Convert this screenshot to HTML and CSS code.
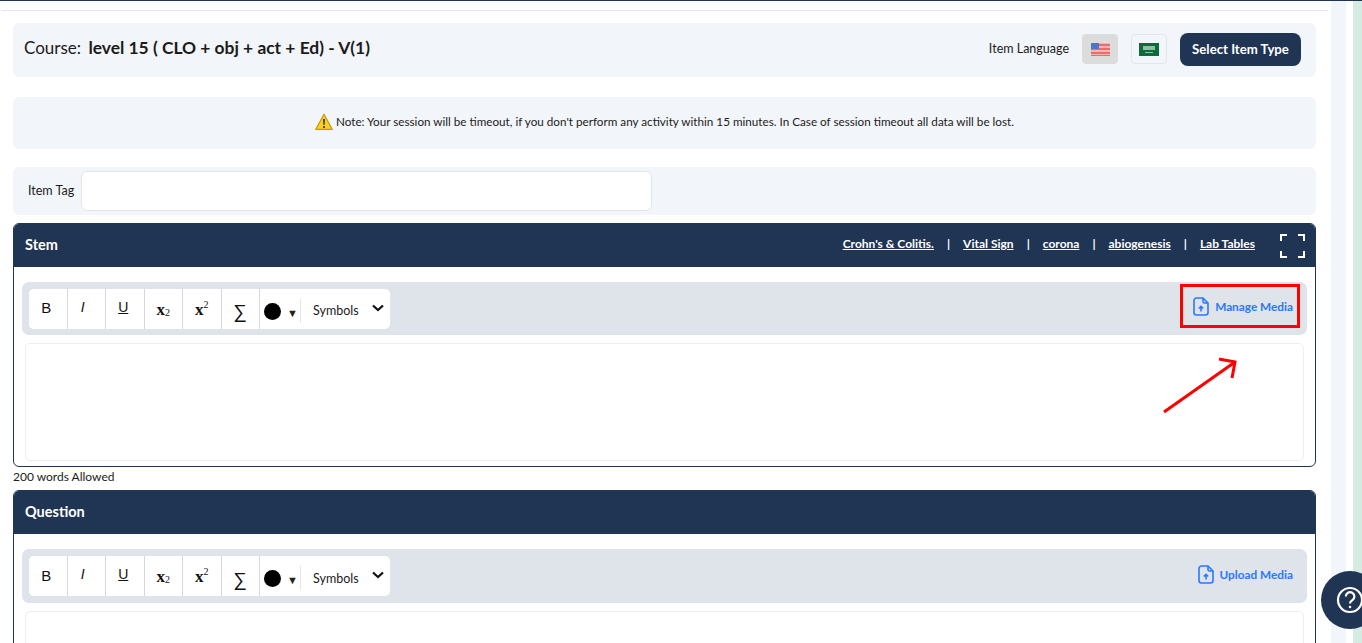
FILE: index.html
```html
<!DOCTYPE html>
<html lang="en">
  <head>
    <meta charset="UTF-8" name="viewport" content="width=device-width, initial-scale=1">
    <title>Add Item</title>
    <link rel="stylesheet" href="styles.css">
  </head>
  <body>
    <div class="top_line"></div>
    <div class="layout">
      <div class="content">
        <div class="rule"></div>

        <div class="card course_card">
          <div class="course_title">Course: <b>level 15 ( CLO + obj + act + Ed) - V(1)</b></div>
          <div class="course_actions">
            <span class="lang_label">Item Language</span>
            <button type="button" class="flag_btn flag_active">
              <svg width="19" height="13" viewBox="0 0 19 13">
                <rect width="19" height="13" fill="#f5b5b5"/>
                <rect y="1" width="19" height="2" fill="#ee6b6b"/>
                <rect y="5" width="19" height="2" fill="#ee6b6b"/>
                <rect y="9" width="19" height="2" fill="#ee6b6b"/>
                <rect y="12" width="19" height="1" fill="#ee6b6b"/>
                <rect width="8" height="6" fill="#4a78c4"/>
              </svg>
            </button>
            <button type="button" class="flag_btn">
              <svg width="20" height="13" viewBox="0 0 20 13">
                <rect width="20" height="13" fill="#0c6b3a"/>
                <rect x="4" y="3" width="12" height="4" fill="#8fbfa3"/>
                <rect x="6" y="9" width="8" height="1" fill="#8fbfa3"/>
              </svg>
            </button>
            <button type="button" class="type_btn">Select Item Type</button>
          </div>
        </div>

        <div class="card note_card">
          <svg class="note_icon" width="18" height="18" viewBox="0 0 18 18">
            <path d="M9 1.2 17.2 16.4H.8Z" fill="#f7d020" stroke="#c99a12" stroke-width="1.2" stroke-linejoin="round"/>
            <path d="M8.1 6h1.8l-.4 6h-1Z" fill="#222"/>
            <circle cx="9" cy="14" r="1" fill="#222"/>
          </svg>
          <span class="note_text">Note: Your session will be timeout, if you don't perform any activity within 15 minutes. In Case of session timeout all data will be lost.</span>
        </div>

        <div class="card tag_card">
          <label class="tag_label" for="item_tag">Item Tag</label>
          <input class="tag_input" type="text" id="item_tag">
        </div>

        <div class="panel stem_panel">
          <div class="panel_head">
            <span class="panel_title">Stem</span>
            <div class="head_links">
              <a href="#">Crohn's &amp; Colitis.</a><span>|</span>
              <a href="#">Vital Sign</a><span>|</span>
              <a href="#">corona</a><span>|</span>
              <a href="#">abiogenesis</a><span>|</span>
              <a href="#">Lab Tables</a>
              <svg class="full_icon" width="25" height="24" viewBox="0 0 25 24" fill="none" stroke="#fff" stroke-width="2">
                <path d="M1 7V1H7M18 1H24V7M1 17V23H7M18 23H24V17"/>
              </svg>
            </div>
          </div>
          <div class="panel_body">
            <div class="toolbar">
              <div class="tools">
                <button type="button" class="tool tool_b">B</button>
                <button type="button" class="tool tool_i">I</button>
                <button type="button" class="tool tool_u">U</button>
                <button type="button" class="tool tool_x">x<sub>2</sub></button>
                <button type="button" class="tool tool_x">x<sup>2</sup></button>
                <button type="button" class="tool tool_sum">∑</button>
                <div class="tool_color"><i class="color_dot"></i><i class="color_arrow">▼</i></div>
                <i class="tool_sep"></i>
                <div class="tool_symbols">Symbols
                  <svg width="12" height="8" viewBox="0 0 12 8" fill="none" stroke="#111" stroke-width="2.2"><path d="M1 1.5 6 6l5-4.5"/></svg>
                </div>
              </div>
              <a class="media_link" href="#">
                <svg width="16" height="19" viewBox="0 0 16 19" fill="none" stroke="#2a78ff" stroke-width="1.6">
                  <path d="M3.5 1H10l5 5v9.500a2.500 2.500 0 0 1-2.500 2.500h-9A2.500 2.500 0 0 1 1 15.500v-12A2.500 2.500 0 0 1 3.500 1Z"/>
                  <path d="M10 1v3.500a1.500 1.500 0 0 0 1.500 1.500H15M8 14.500V9.500M5.800 11.500 8 9.300l2.200 2.200"/>
                </svg>
                Manage Media
              </a>
            </div>
            <div class="editor stem_editor"></div>
          </div>
        </div>
        <div class="word_hint">200 words Allowed</div>

        <div class="panel question_panel">
          <div class="panel_head">
            <span class="panel_title">Question</span>
          </div>
          <div class="panel_body">
            <div class="toolbar toolbar_tall">
              <div class="tools">
                <button type="button" class="tool tool_b">B</button>
                <button type="button" class="tool tool_i">I</button>
                <button type="button" class="tool tool_u">U</button>
                <button type="button" class="tool tool_x">x<sub>2</sub></button>
                <button type="button" class="tool tool_x">x<sup>2</sup></button>
                <button type="button" class="tool tool_sum">∑</button>
                <div class="tool_color"><i class="color_dot"></i><i class="color_arrow">▼</i></div>
                <i class="tool_sep"></i>
                <div class="tool_symbols">Symbols
                  <svg width="12" height="8" viewBox="0 0 12 8" fill="none" stroke="#111" stroke-width="2.2"><path d="M1 1.5 6 6l5-4.5"/></svg>
                </div>
              </div>
              <a class="media_link" href="#">
                <svg width="16" height="19" viewBox="0 0 16 19" fill="none" stroke="#2a78ff" stroke-width="1.6">
                  <path d="M3.5 1H10l5 5v9.500a2.500 2.500 0 0 1-2.500 2.500h-9A2.500 2.500 0 0 1 1 15.500v-12A2.500 2.500 0 0 1 3.500 1Z"/>
                  <path d="M10 1v3.500a1.500 1.500 0 0 0 1.500 1.500H15M8 14.500V9.500M5.800 11.500 8 9.300l2.200 2.200"/>
                </svg>
                Upload Media
              </a>
            </div>
            <div class="editor"></div>
          </div>
        </div>
      </div>
      <div class="rail"></div>
      <div class="rail_gap"></div>
      <div class="rail_green"></div>
    </div>

    <!-- annotation drawn over the screenshot -->
    <div class="mark_box"></div>
    <svg class="mark_arrow" width="80" height="60" viewBox="0 0 80 60" fill="none" stroke="#f00" stroke-width="3">
      <path d="M3 57 74 7M58 4 74 7 71 23"/>
    </svg>

    <button type="button" class="help_btn">
      <svg width="30" height="30" viewBox="0 0 30 30" fill="none" stroke="#fff" stroke-width="2.2">
        <circle cx="15" cy="15" r="12"/>
        <path d="M10.800 11.500a4.300 4.300 0 1 1 6.500 3.700c-1.500.9-2.300 1.700-2.300 3.300"/>
        <circle cx="15" cy="22" r="1.300" fill="#fff" stroke="none"/>
      </svg>
    </button>
  </body>
</html>
```

FILE: styles.css
```css
body {
  margin: 0;
  height: 643px;
  overflow: hidden;
  background-color: #ffffff;
  color: #1b1b1b;
  font-family: "Lato", "Noto Sans", sans-serif;
}

.top_line {
  height: 1px;
  background-color: #203453;
}

.layout {
  display: flex;
  height: 642px;
  overflow: hidden;
}

.content {
  width: 1331px;
  flex: none;
  padding: 9px 15px 0 13px;
  box-sizing: border-box;
}

.rule {
  height: 1px;
  margin: 0 -12px 12px -12px;
  background-color: #e4e6e8;
}

.rail {
  width: 15px;
  background-color: #f2f5f9;
}

.rail_gap {
  width: 7px;
}

.rail_green {
  flex: 1;
  background-color: #d5eae0;
}

.card {
  background-color: #f2f5f9;
  border-radius: 6px;
}

/* course bar */
.course_card {
  display: flex;
  align-items: center;
  justify-content: space-between;
  height: 54px;
  padding: 0 15px 0 11px;
  box-sizing: border-box;
}

.course_title {
  font-size: 17px;
  padding-bottom: 5px;
}

.course_title b {
  margin-left: 3px;
  font-weight: 700;
  font-size: 17.400px;
}

.course_actions {
  display: flex;
  align-items: center;
  margin-bottom: 2px;
}

.lang_label {
  font-size: 12.500px;
  margin-right: 13px;
  padding-bottom: 1px;
}

.flag_btn {
  display: flex;
  align-items: center;
  justify-content: center;
  width: 36px;
  height: 30px;
  margin-right: 13px;
  padding: 0;
  border: 1px solid #e3e6ea;
  border-radius: 4px;
  background-color: #f2f5f9;
}

.flag_active {
  background-color: #dcdcdc;
  border-color: #dcdcdc;
}

.type_btn {
  width: 121px;
  height: 33px;
  padding: 0;
  border: none;
  border-radius: 8px;
  background-color: #203453;
  color: #ffffff;
  font-family: inherit;
  font-size: 13.200px;
  font-weight: 700;
}

/* session note */
.note_card {
  display: flex;
  align-items: center;
  justify-content: center;
  gap: 3px;
  height: 52px;
  margin-top: 20px;
  font-size: 11.700px;
}

.note_icon {
  margin-bottom: 2px;
}

.note_text {
  padding-bottom: 4px;
}

/* tag */
.tag_card {
  display: flex;
  align-items: center;
  height: 48px;
  margin-top: 18px;
  padding-left: 15px;
  box-sizing: border-box;
}

.tag_label {
  width: 53px;
  padding-bottom: 2px;
  font-size: 12.500px;
}

.tag_input {
  width: 571px;
  height: 40px;
  box-sizing: border-box;
  border: 1px solid #e2e6ea;
  border-radius: 6px;
  background-color: #ffffff;
}

/* panels */
.panel {
  border: 1px solid #203453;
  border-radius: 6px;
  overflow: hidden;
  box-sizing: border-box;
}

.stem_panel {
  height: 244px;
  margin-top: 8px;
}

.question_panel {
  height: 200px;
}

.panel_head {
  display: flex;
  align-items: center;
  justify-content: space-between;
  height: 43px;
  padding: 0 10px 0 11px;
  background-color: #203453;
  color: #ffffff;
}

.panel_title {
  padding-bottom: 3px;
  font-size: 14.500px;
  font-weight: 700;
}

.head_links {
  display: flex;
  align-items: center;
  gap: 13px;
  font-size: 12px;
  font-weight: 700;
}

.head_links a,
.head_links span {
  padding-bottom: 5px;
}

.head_links a {
  color: #ffffff;
  text-decoration: underline;
}

.full_icon {
  margin-left: 12px;
}

.panel_body {
  padding: 15px 8px 0;
}

.toolbar {
  display: flex;
  align-items: center;
  justify-content: space-between;
  height: 53px;
  padding: 0 14px 0 7px;
  box-sizing: border-box;
  border-radius: 7px;
  background-color: #dfe3ea;
}

.toolbar_tall {
  height: 54px;
}

.tools {
  display: flex;
  align-items: center;
  height: 40px;
  width: 361px;
  border-radius: 5px;
  overflow: hidden;
  background-color: #ffffff;
}

.tool {
  align-self: stretch;
  width: 38.500px;
  flex: none;
  padding: 0 0 4px;
  border: none;
  border-right: 1px solid #d7d7d7;
  background-color: #ffffff;
  color: #111111;
  font-family: "Liberation Sans", Arial, sans-serif;
  font-size: 14px;
}

.tool_b {
  padding: 0 3px 2px 0;
  font-size: 15px;
}

.tool_i {
  padding-right: 7px;
  font-style: italic;
}

.tool_u {
  padding-right: 3px;
  text-decoration: underline;
}

.tool_x {
  padding: 2px 0 0;
  font-family: "Liberation Serif", serif;
  font-size: 17px;
  font-weight: 700;
}

.tool_x sub,
.tool_x sup {
  font-size: 10px;
  font-weight: 400;
  line-height: 0;
}

.tool_x sub {
  vertical-align: -1px;
}

.tool_sum {
  font-family: "DejaVu Sans", sans-serif;
  font-size: 19px;
  font-weight: 200;
  padding: 6px 0 0;
}

.tool_color {
  display: flex;
  align-items: center;
  width: 40px;
  flex: none;
  padding: 5px 0 0 4px;
  box-sizing: border-box;
}

.color_dot {
  width: 17px;
  height: 17px;
  border-radius: 50%;
  background-color: #000000;
}

.color_arrow {
  margin: 2px 0 0 6px;
  font-size: 11px;
  font-style: normal;
  color: #222222;
}

.tool_sep {
  width: 1px;
  height: 24px;
  flex: none;
  margin-top: 4px;
  background-color: #e6e6e6;
}

.tool_symbols {
  display: flex;
  align-items: center;
  justify-content: space-between;
  flex: 1;
  padding: 4px 6px 0 12px;
  font-size: 12.500px;
}

.tool_symbols svg {
  margin-bottom: 6px;
}

.media_link {
  display: flex;
  align-items: center;
  gap: 6px;
  padding-bottom: 4px;
  color: #2a78ff;
  font-size: 11.800px;
  font-weight: 700;
  text-decoration: none;
}

.editor {
  height: 118px;
  margin: 8px 3px 0;
  border: 1px solid #eceef1;
  border-radius: 5px;
  box-sizing: border-box;
}

.word_hint {
  height: 23px;
  line-height: 20px;
  font-size: 12px;
}

/* annotation */
.mark_box {
  position: absolute;
  left: 1180px;
  top: 284px;
  width: 120px;
  height: 44px;
  box-sizing: border-box;
  border: 3px solid #ff0000;
}

.mark_arrow {
  position: absolute;
  left: 1161px;
  top: 355px;
}

.help_btn {
  position: absolute;
  left: 1321px;
  top: 571px;
  display: flex;
  align-items: center;
  justify-content: center;
  width: 58px;
  height: 58px;
  padding: 0;
  border: none;
  border-radius: 50%;
  background-color: #203453;
}
```
